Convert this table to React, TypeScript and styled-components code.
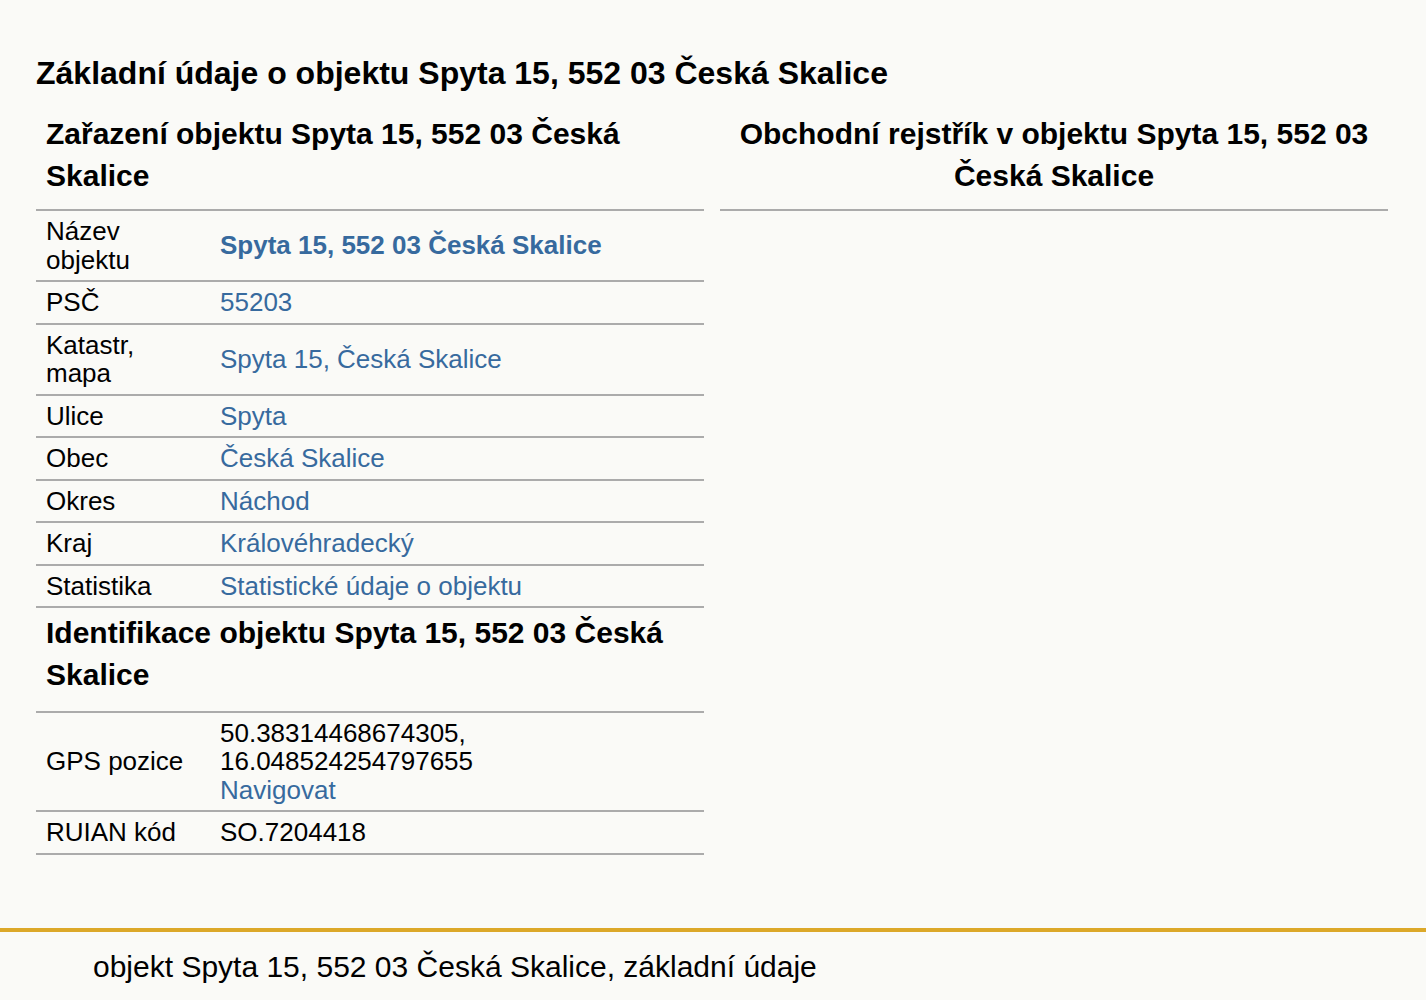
import React from "react";
import styled, { createGlobalStyle } from "styled-components";

const Global = createGlobalStyle`
  html, body {
    margin: 0;
    padding: 0;
    background: #fafaf7;
  }
  body {
    font-family: "Liberation Sans", Arial, sans-serif;
    color: #000;
  }
`;

const Page = styled.div`
  min-height: 1000px;
  display: flex;
  flex-direction: column;
`;

const Main = styled.main`
  padding: 54px 38px 0 36px;
`;

const Title = styled.h1`
  margin: 0;
  font-size: 32px;
  line-height: 38px;
  font-weight: 700;
`;

const Columns = styled.div`
  display: grid;
  grid-template-columns: 668px 668px;
  column-gap: 16px;
  margin-top: 17px;
  align-items: start;
`;

const Table = styled.table`
  width: 100%;
  border-collapse: collapse;
  font-size: 26px;
  line-height: 28.5px;
`;

const HeadCell = styled.th<{ $center?: boolean; $tight?: boolean }>`
  padding: 4px 10px ${(p) => (p.$tight ? "12px" : "14.5px")};
  font-size: 30px;
  line-height: 42px;
  font-weight: 700;
  text-align: ${(p) => (p.$center ? "center" : "left")};
  border-bottom: 2px solid #ababab;
`;

const Row = styled.tr`
  border-bottom: 2px solid #ababab;
`;

const Label = styled.td`
  width: 154px;
  padding: 6px 10px;
  vertical-align: middle;
  text-align: left;
`;

const Value = styled.td`
  padding: 6px 10px;
  vertical-align: middle;
`;

const Link = styled.a<{ $bold?: boolean }>`
  color: #376a9e;
  text-decoration: none;
  font-weight: ${(p) => (p.$bold ? 700 : 400)};
`;

const Footer = styled.footer`
  margin-top: 73px;
  border-top: 4px solid #dca829;
  padding: 18.5px 0 0 93px;
  font-size: 30px;
  line-height: 34px;
`;

type Item = { label: string; value: string; bold?: boolean };

const rows: Item[] = [
  { label: "Název objektu", value: "Spyta 15, 552 03 Česká Skalice", bold: true },
  { label: "PSČ", value: "55203" },
  { label: "Katastr, mapa", value: "Spyta 15, Česká Skalice" },
  { label: "Ulice", value: "Spyta" },
  { label: "Obec", value: "Česká Skalice" },
  { label: "Okres", value: "Náchod" },
  { label: "Kraj", value: "Královéhradecký" },
  { label: "Statistika", value: "Statistické údaje o objektu" },
];

export default function App() {
  return (
    <Page>
      <Global />
      <Main>
        <Title>Základní údaje o objektu Spyta 15, 552 03 Česká Skalice</Title>
        <Columns>
          <Table>
            <tbody>
              <tr>
                <HeadCell colSpan={2} $tight>
                  Zařazení objektu Spyta 15, 552 03 Česká Skalice
                </HeadCell>
              </tr>
              {rows.map((r) => (
                <Row key={r.label}>
                  <Label>{r.label}</Label>
                  <Value>
                    <Link href="#" $bold={r.bold}>
                      {r.value}
                    </Link>
                  </Value>
                </Row>
              ))}
              <tr>
                <HeadCell colSpan={2}>Identifikace objektu Spyta 15, 552 03 Česká Skalice</HeadCell>
              </tr>
              <Row>
                <Label>GPS pozice</Label>
                <Value>
                  50.38314468674305,
                  <br />
                  16.048524254797655
                  <br />
                  <Link href="#">Navigovat</Link>
                </Value>
              </Row>
              <Row>
                <Label>RUIAN kód</Label>
                <Value>SO.7204418</Value>
              </Row>
            </tbody>
          </Table>
          <Table>
            <tbody>
              <tr>
                <HeadCell $center $tight>
                  Obchodní rejstřík v objektu Spyta 15, 552 03 Česká Skalice
                </HeadCell>
              </tr>
            </tbody>
          </Table>
        </Columns>
      </Main>
      <Footer>objekt Spyta 15, 552 03 Česká Skalice, základní údaje</Footer>
    </Page>
  );
}
